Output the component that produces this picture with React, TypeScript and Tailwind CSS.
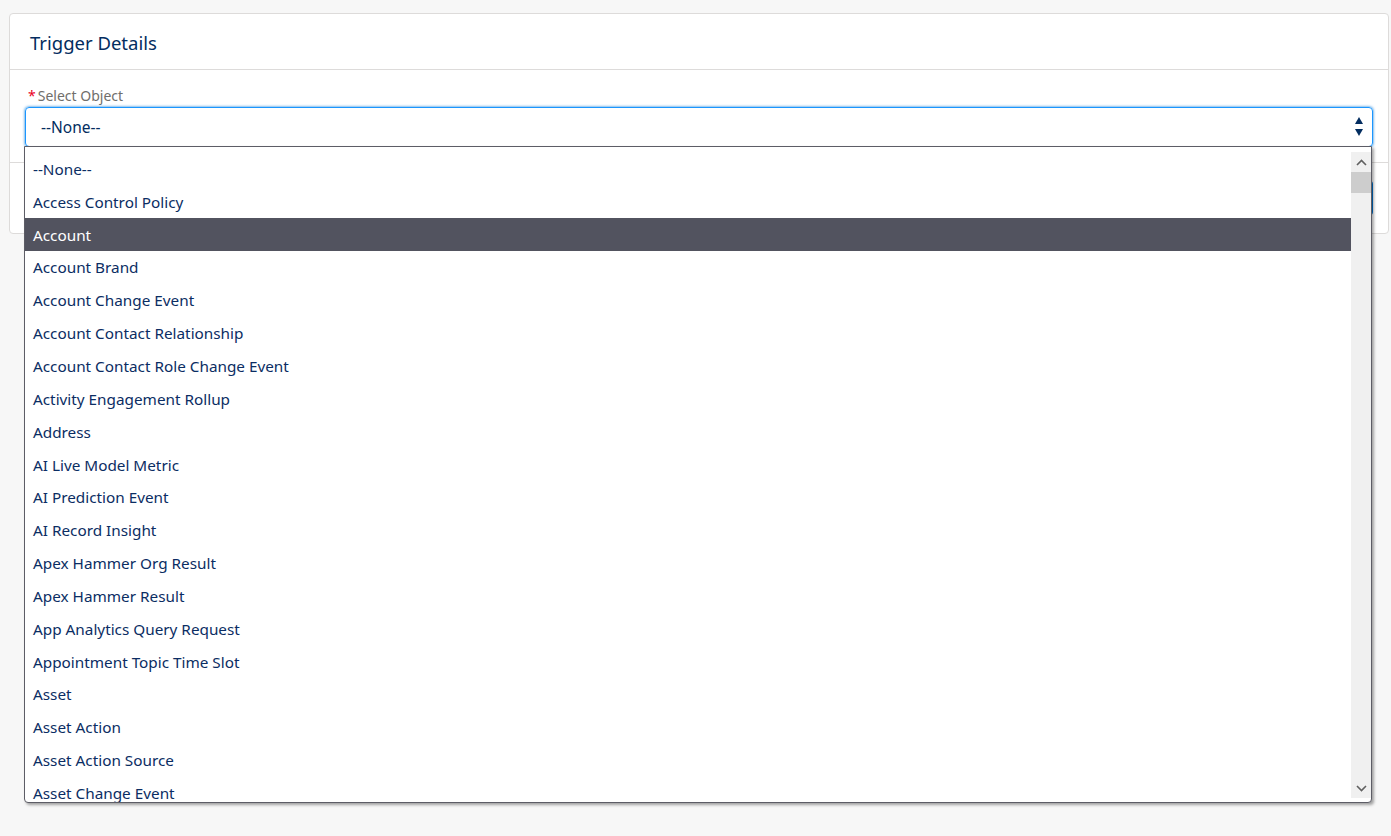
import React from "react";

const objects = [
  "--None--",
  "Access Control Policy",
  "Account",
  "Account Brand",
  "Account Change Event",
  "Account Contact Relationship",
  "Account Contact Role Change Event",
  "Activity Engagement Rollup",
  "Address",
  "AI Live Model Metric",
  "AI Prediction Event",
  "AI Record Insight",
  "Apex Hammer Org Result",
  "Apex Hammer Result",
  "App Analytics Query Request",
  "Appointment Topic Time Slot",
  "Asset",
  "Asset Action",
  "Asset Action Source",
  "Asset Change Event",
  "Asset Relationship",
];

export default function App() {
  const selected = "Account";

  return (
    <div className="min-h-[836px] bg-[#f7f7f7] pt-[13px] px-[9px] font-['Noto_Sans',sans-serif] text-[#080707]">
      <div className="relative">
        {/* Trigger card */}
        <div className="bg-white border border-[#dddbda] rounded-[4px] w-[1380px]">
          <div className="h-[56px] flex items-center px-[20px] border-b border-[#dddbda]">
            <h2 className="text-[18.5px] text-[#032d60] pt-[3px]">Trigger Details</h2>
          </div>
          <div className="px-[15px] pt-[16px] pb-[15px] border-b border-[#dddbda]">
            <label className="block text-[14px] leading-[20px] text-[#706e6b] mb-[1px] pl-[3px]">
              <abbr className="text-[#ea001e] no-underline mr-[2px]">*</abbr>Select Object
            </label>
            <div className="relative h-[40px] rounded-[4px] border border-[#1b96ff] shadow-[0_0_3px_#0176d3] flex items-center pl-[15px]">
              <span className="text-[15.5px] text-[#032d60] pt-[1px]">--None--</span>
              <div className="absolute right-[9px] top-[9px] flex flex-col items-center gap-[5px]">
                <svg width="8" height="7" viewBox="0 0 8 7"><path d="M4 0 L8 7 L0 7 Z" fill="#032d60" /></svg>
                <svg width="8" height="7" viewBox="0 0 8 7"><path d="M0 0 L8 0 L4 7 Z" fill="#032d60" /></svg>
              </div>
            </div>
          </div>
          <div className="h-[70px] flex items-center justify-end px-[15px]">
            <button className="h-[36px] px-[16px] rounded-[4px] bg-[#0176d3] border border-[#0176d3] text-white text-[13px]">Save</button>
          </div>
        </div>

        {/* Native select popup */}
        <div className="absolute left-[15px] top-[133px] w-[1348px] h-[657px] bg-white border border-[#5d5d66] rounded-b-[4px] shadow-[2px_2px_3px_rgba(0,0,0,0.35)] flex overflow-hidden">
          <ul className="flex-1 pt-[5px] overflow-hidden">
            {objects.map((o) => (
              <li
                key={o}
                className={
                  o === selected
                    ? "h-[32.85px] flex items-center px-[8px] pt-[2px] text-[15.3px] bg-[#52535f] text-white"
                    : "h-[32.85px] flex items-center px-[8px] pt-[2px] text-[15.3px] text-[#0b2d63]"
                }
              >
                {o}
              </li>
            ))}
          </ul>
          <div className="w-[20px] mt-[5px] mb-[4px] bg-[#f0f0f0] flex flex-col">
            <div className="h-[20px] flex items-center justify-center">
              <svg width="11" height="7" viewBox="0 0 11 7"><path d="M1 6 L5.5 1.5 L10 6" stroke="#606060" strokeWidth="1.6" fill="none" /></svg>
            </div>
            <div className="h-[21px] bg-[#cdcdcd]" />
            <div className="flex-1" />
            <div className="h-[20px] flex items-center justify-center">
              <svg width="11" height="7" viewBox="0 0 11 7"><path d="M1 1 L5.5 5.5 L10 1" stroke="#606060" strokeWidth="1.6" fill="none" /></svg>
            </div>
          </div>
        </div>
      </div>
    </div>
  );
}
